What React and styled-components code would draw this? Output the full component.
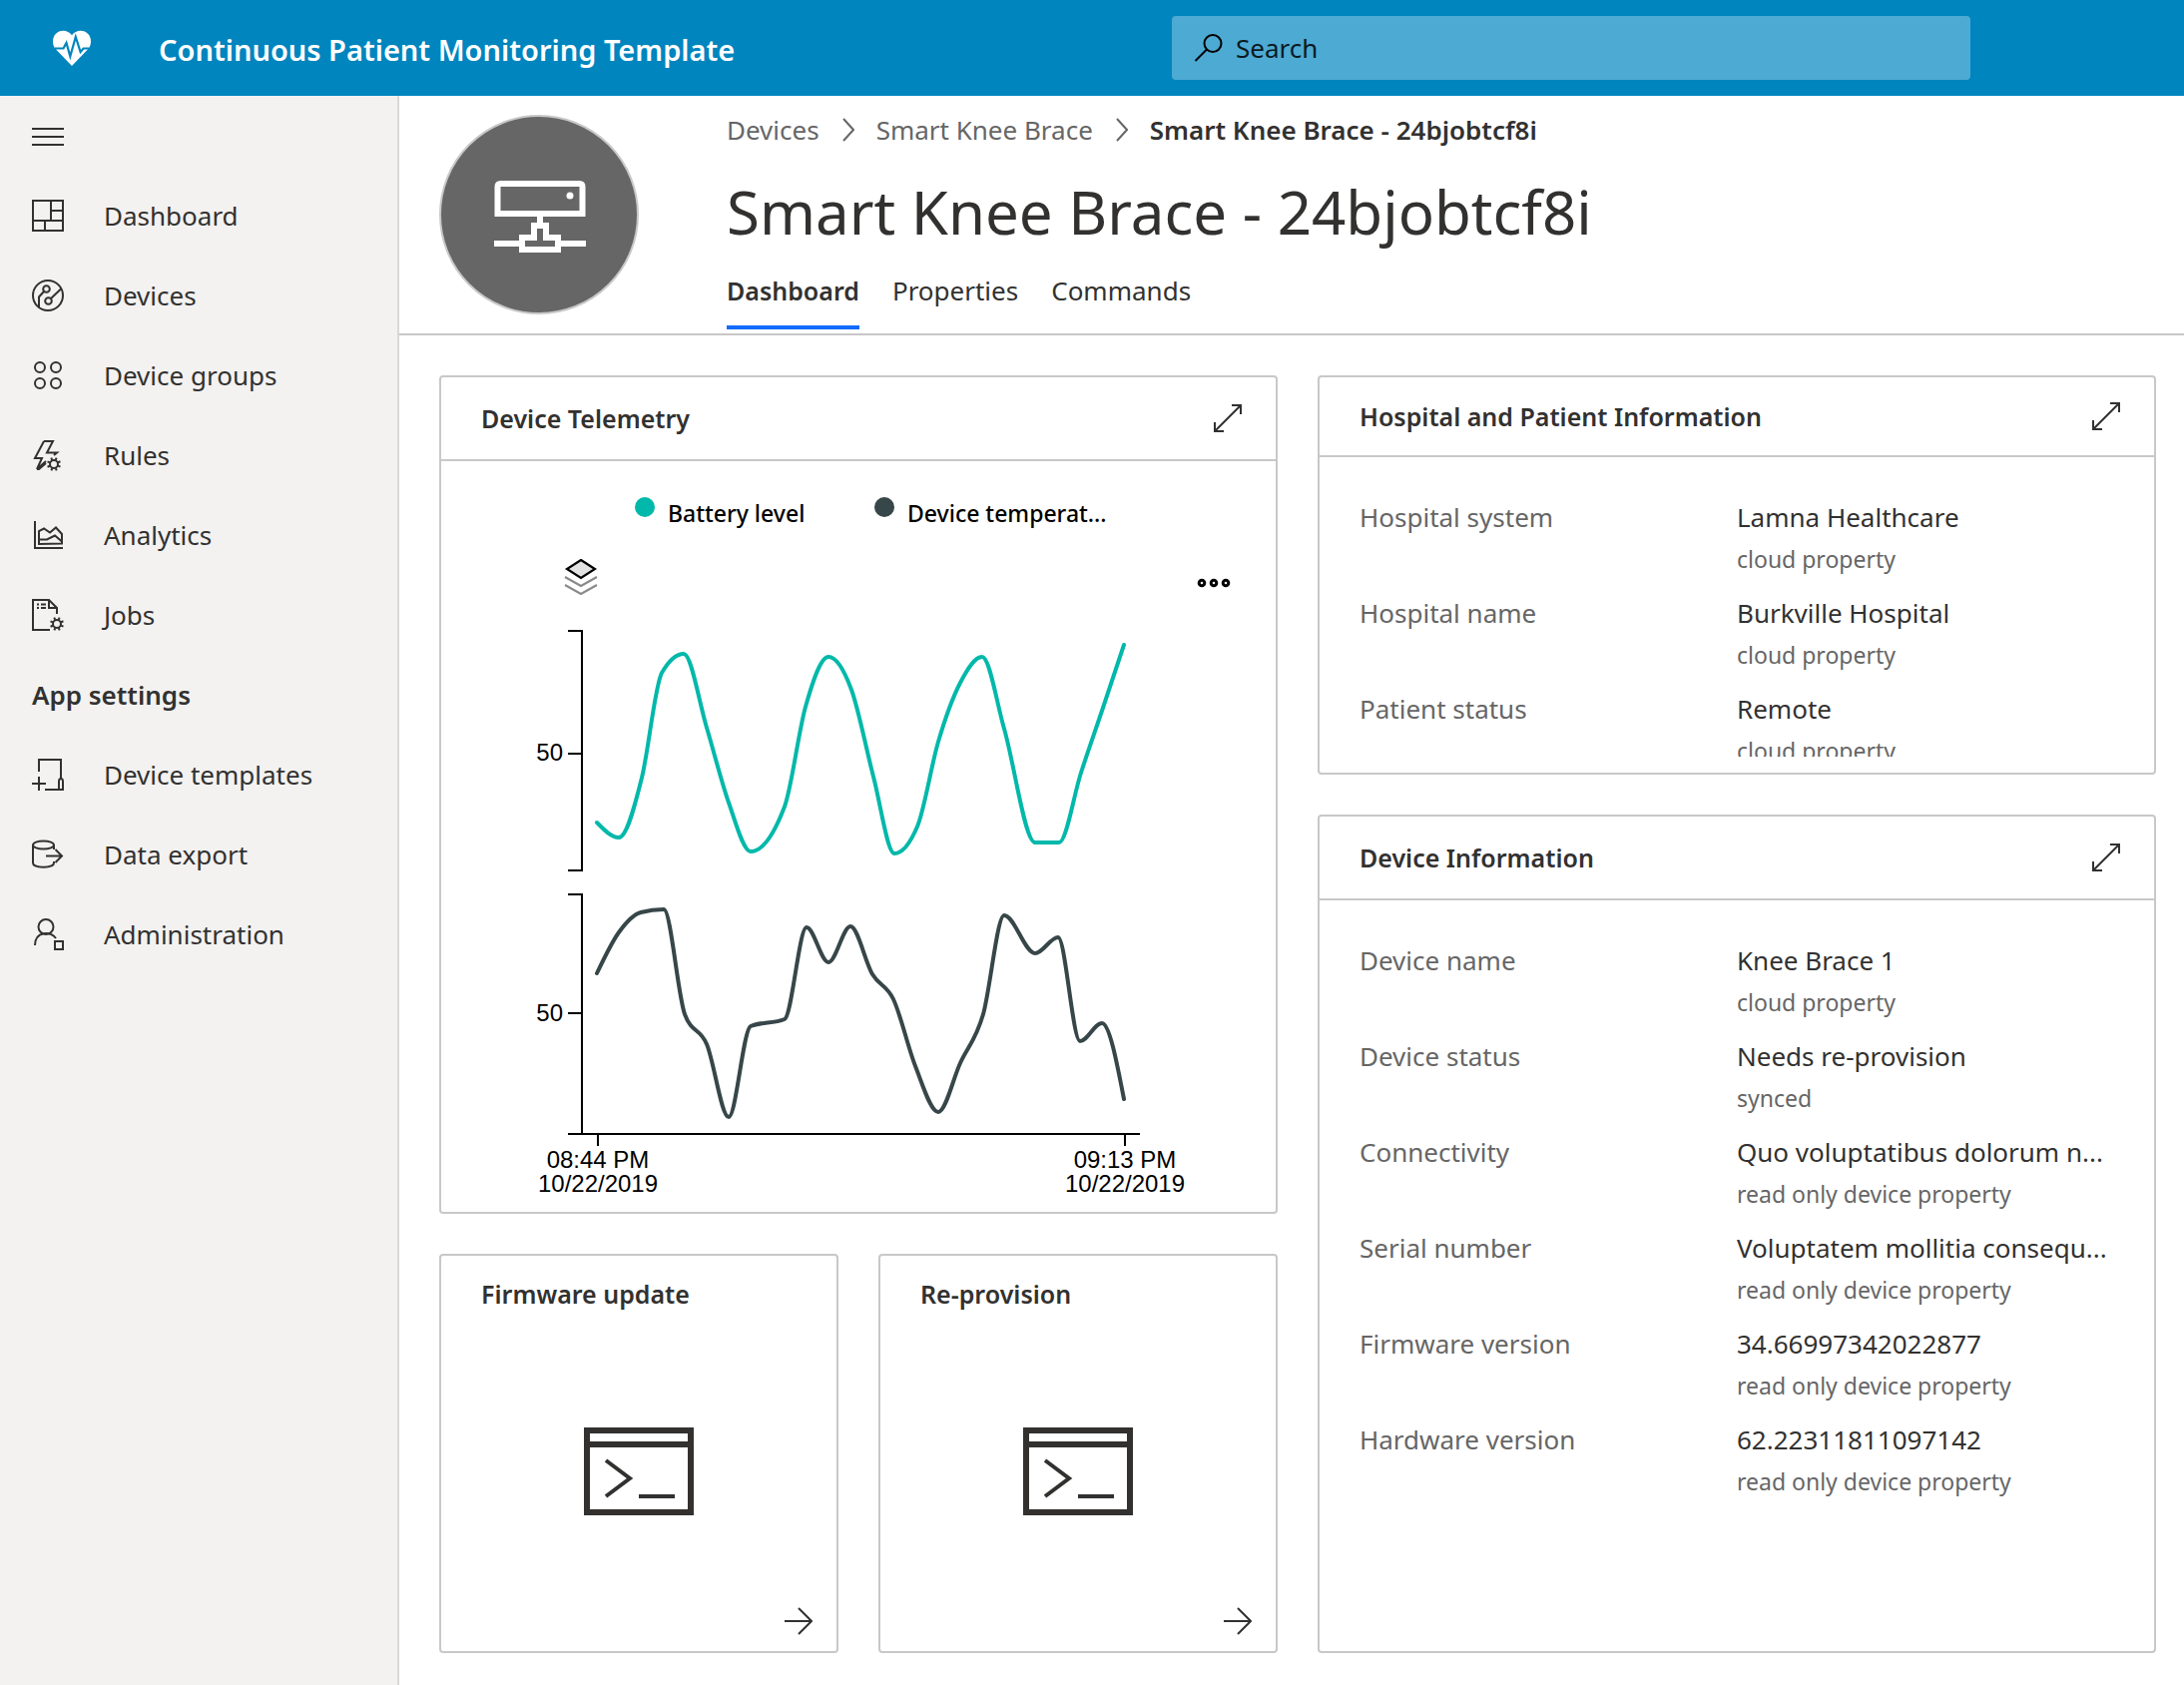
import React from "react";
import styled, { createGlobalStyle } from "styled-components";

const color = {
  brand: "#0085be",
  searchFill: "#4daad3",
  ink: "#323130",
  muted: "#666666",
  line: "#c8c8c8",
  sidebar: "#f3f2f1",
  accent: "#136bfb",
  teal: "#01b8aa",
  slate: "#374649",
};

const GlobalStyle = createGlobalStyle`
  *, *::before, *::after { box-sizing: border-box; }
  body {
    margin: 0;
    background: #ffffff;
    color: ${color.ink};
    font-family: "Noto Sans", "Open Sans", sans-serif;
    font-size: 26px;
    line-height: 40px;
  }
  h1, h2, p, ul, ol, dl, dd { margin: 0; padding: 0; }
  ul, ol { list-style: none; }
  a { color: inherit; text-decoration: none; }
  button {
    font: inherit;
    color: inherit;
    background: none;
    border: 0;
    padding: 0;
    cursor: pointer;
  }
  svg { display: block; }
`;

/* ---------- shell ---------- */

const Page = styled.div`
  display: flex;
  flex-direction: column;
  min-height: 100vh;
`;

const TopBar = styled.header`
  display: flex;
  align-items: center;
  height: 96px;
  padding: 0 214px 0 52px;
  background: ${color.brand};
  color: #ffffff;
`;

const AppTitle = styled.a`
  margin-left: 67px;
  padding-top: 3px;
  font-size: 29px;
  font-weight: 600;
  white-space: nowrap;
`;

const SearchBox = styled.label`
  display: flex;
  align-items: center;
  gap: 12px;
  flex: 0 1 800px;
  height: 64px;
  margin-left: auto;
  padding: 0 22px;
  border-radius: 4px;
  background: ${color.searchFill};
  color: #000000;
`;

const SearchInput = styled.input`
  flex: 1;
  min-width: 0;
  border: 0;
  outline: 0;
  padding: 0;
  background: transparent;
  color: inherit;
  font: inherit;
  &::placeholder {
    color: #0b1a22;
    opacity: 1;
  }
`;

const Body = styled.div`
  display: flex;
  flex: 1;
`;

const Sidebar = styled.nav`
  flex: 0 0 400px;
  border-right: 2px solid #d8d8d8;
  background: ${color.sidebar};
`;

const MenuButton = styled.button`
  display: flex;
  align-items: center;
  width: 100%;
  height: 80px;
  padding-left: 32px;
`;

const NavLink = styled.a`
  display: flex;
  align-items: center;
  gap: 40px;
  height: 80px;
  padding-left: 32px;
`;

const NavHeading = styled.h2`
  height: 80px;
  padding-left: 32px;
  font-size: 26px;
  font-weight: 600;
  line-height: 80px;
`;

const Main = styled.main`
  flex: 1;
  min-width: 0;
`;

/* ---------- device header ---------- */

const DeviceHeader = styled.div`
  display: flex;
  gap: 88px;
  height: 240px;
  padding: 0 40px;
  border-bottom: 2px solid ${color.line};
`;

const Avatar = styled.div`
  display: flex;
  align-items: center;
  justify-content: center;
  width: 200px;
  height: 200px;
  margin-top: 19px;
  padding: 4px 0 0 2px;
  border: 2px solid ${color.line};
  border-radius: 50%;
  background: #666666;
`;

const HeaderText = styled.div`
  padding-top: 14px;
`;

const Crumbs = styled.ol`
  display: flex;
  align-items: center;
  color: ${color.muted};
`;

const Crumb = styled.li`
  display: flex;
  align-items: center;
  color: ${(p) => (p.$current ? color.ink : color.muted)};
  font-weight: ${(p) => (p.$current ? 600 : 400)};
  svg { margin: 0 22px 0 23px; }
`;

const DeviceTitle = styled.h1`
  margin: 22px 0 21px;
  font-size: 60px;
  font-weight: 400;
  line-height: 80px;
`;

const Tabs = styled.div`
  display: flex;
  gap: 33px;
`;

const Tab = styled.button`
  height: 57px;
  padding-bottom: 17px;
  border-bottom: 4px solid ${(p) => (p.$active ? color.accent : "transparent")};
  font-size: ${(p) => (p.$active ? "25px" : "26px")};
  font-weight: ${(p) => (p.$active ? 600 : 400)};
  line-height: 36px;
`;

/* ---------- tiles ---------- */

const Board = styled.div`
  display: grid;
  grid-template-columns: repeat(4, minmax(0, 1fr));
  grid-auto-rows: 400px;
  gap: 40px;
  padding: 40px 28px 32px 40px;
`;

const Tile = styled.section`
  display: flex;
  flex-direction: column;
  grid-column: ${(p) => p.$column};
  grid-row: ${(p) => p.$row};
  border: 2px solid ${color.line};
  border-radius: 4px;
  overflow: hidden;
`;

const TileHeader = styled.header`
  display: flex;
  flex: none;
  align-items: center;
  justify-content: space-between;
  height: ${(p) => (p.$compact ? "80px" : "84px")};
  padding: 0 33px 0 40px;
  border-bottom: 2px solid ${color.line};
`;

const TileTitle = styled.h2`
  font-size: 25px;
  font-weight: 600;
  line-height: 40px;
`;

const IconButton = styled.button`
  display: flex;
`;

const PropertyClip = styled.div`
  flex: 1;
  min-height: 0;
  margin-bottom: 16px;
  padding: 40px 40px 0;
  overflow: hidden;
`;

const PropertyRow = styled.div`
  display: grid;
  grid-template-columns: 1fr 1fr;
  height: 96px;
`;

const PropertyName = styled.dt`
  color: ${color.muted};
`;

const PropertyValue = styled.dd`
  white-space: nowrap;
`;

const PropertyKind = styled.p`
  color: ${color.muted};
  font-size: 23px;
  line-height: 44px;
`;

const ActionTile = styled(Tile)`
  padding: 18px 24px 16px 40px;
`;

const ActionArt = styled.div`
  display: flex;
  flex: 1;
  align-items: center;
  justify-content: center;
  margin: 22px 16px 0 0;
`;

const ActionFooter = styled.div`
  display: flex;
  justify-content: flex-end;
`;

/* ---------- telemetry ---------- */

const Telemetry = styled.div`
  display: flex;
  flex-direction: column;
  flex: 1;
`;

const Legend = styled.ul`
  display: flex;
  justify-content: center;
  padding: 32px 0 0 32px;
`;

const LegendItem = styled.li`
  display: flex;
  align-items: flex-start;
  gap: 13px;
  width: 240px;
  color: #000000;
  font-size: 23px;
  font-weight: 500;
  white-space: nowrap;
`;

const Swatch = styled.span`
  flex: none;
  width: 20px;
  height: 20px;
  margin-top: 4px;
  border-radius: 50%;
  background: ${(p) => p.$fill};
`;

const ChartTools = styled.div`
  display: flex;
  align-items: flex-end;
  justify-content: space-between;
  padding: 26px 45px 26px 123px;
`;

const MoreButton = styled(IconButton)`
  padding-bottom: 7px;
`;

const Chart = styled.svg`
  width: 100%;
  height: auto;
  text {
    fill: #000000;
    font-family: "Liberation Sans", Arial, sans-serif;
    font-size: 24px;
  }
`;

/* ---------- chart data and curve ---------- */

const batteryLevel = [
  [156, 202], [178, 217], [201, 157], [221, 52], [243, 33], [266, 107],
  [288, 182], [310, 231], [344, 186], [365, 86], [388, 36], [411, 69],
  [433, 156], [454, 233], [477, 206], [498, 121], [520, 62], [542, 36],
  [564, 108], [595, 222], [619, 222], [641, 152], [663, 87], [684, 24],
];

const deviceTemperature = [
  [156, 353], [178, 312], [200, 292], [223, 289], [244, 394], [266, 424],
  [288, 497], [310, 406], [344, 399], [366, 307], [388, 342], [410, 306],
  [432, 354], [453, 379], [475, 446], [498, 492], [520, 443], [543, 394],
  [564, 295], [595, 333], [618, 317], [640, 421], [662, 403], [684, 479],
];

// Monotone cubic interpolation: no overshoot between samples.
function monotonePath(points) {
  const n = points.length;
  const slope = points.slice(1).map(([x, y], i) => (y - points[i][1]) / (x - points[i][0]));
  const tangent = points.map((_, i) => {
    if (i === 0 || i === n - 1) return null;
    const s0 = slope[i - 1];
    const s1 = slope[i];
    if (s0 * s1 <= 0) return 0;
    const h0 = points[i][0] - points[i - 1][0];
    const h1 = points[i + 1][0] - points[i][0];
    const p = (s0 * h1 + s1 * h0) / (h0 + h1);
    return 2 * Math.sign(s0) * Math.min(Math.abs(s0), Math.abs(s1), Math.abs(p) / 2);
  });
  tangent[0] = (3 * slope[0] - tangent[1]) / 2;
  tangent[n - 1] = (3 * slope[n - 2] - tangent[n - 2]) / 2;
  return points.slice(1).reduce((d, [x, y], i) => {
    const [px, py] = points[i];
    const dx = (x - px) / 3;
    return `${d}C${px + dx},${py + dx * tangent[i]},${x - dx},${y - dx * tangent[i + 1]},${x},${y}`;
  }, `M${points[0]}`);
}

/* ---------- icons ---------- */

const Line = ({ size = 32, width = size, height = size, stroke = 2, children, ...rest }) => (
  <svg width={width} height={height} viewBox={`0 0 ${width} ${height}`} fill="none" stroke="currentColor" strokeWidth={stroke} aria-hidden="true" {...rest}>
    {children}
  </svg>
);

const Gear = ({ x, y }) => (
  <g transform={`translate(${x} ${y})`}>
    <circle r="4" />
    {[0, 45, 90, 135, 180, 225, 270, 315].map((a) => (
      <path key={a} d="M0-4.5V-7" transform={`rotate(${a + 22})`} />
    ))}
  </g>
);

const HeartIcon = () => (
  <svg width="40" height="36" viewBox="0 0 40 36" aria-hidden="true">
    <path fill="#fff" d="M20 36 3.600 19C0 15 .2 8 3.500 4.200 8-.8 16-.4 20 5.200 24-.4 32-.8 36.500 4.200 39.800 8 40 15 36.400 19Z" />
    <path fill="none" stroke={color.brand} strokeWidth="2.200" d="M3 18.500h8.500L14.500 13l3.800 13.500L23.800 7l4.800 15 3-3.500H37" />
  </svg>
);

const SearchIcon = () => (
  <Line width={30} height={30}>
    <circle cx="19" cy="10.500" r="8.500" />
    <path d="M13 16.500 1.500 28" />
  </Line>
);

const icons = {
  dashboard: (
    <Line><path d="M1 1h30v30H1ZM19 1v20M19 11h12M1 21h30M13 21v10" /></Line>
  ),
  devices: (
    <Line>
      <circle cx="16" cy="16" r="15" />
      <circle cx="14.500" cy="9.500" r="3.300" />
      <circle cx="16.500" cy="21.500" r="3.300" />
      <path d="M12 12 7 17.500V28M19 19 29 9.500" />
    </Line>
  ),
  groups: (
    <Line>
      <circle cx="8" cy="8" r="5" /><circle cx="24" cy="8" r="5" />
      <circle cx="8" cy="24" r="5" /><circle cx="24" cy="24" r="5" />
    </Line>
  ),
  rules: (
    <Line>
      <path d="M12 2h9l-6 11.500h10L22 16M12 2 3 19h7L5 30l9-8M5 30h2l7-6" />
      <Gear x={22} y={25} />
    </Line>
  ),
  analytics: (
    <Line>
      <path d="M3 2v27h28M7 25V12l5-2.500 6 4 6-5 6 6.500v9.500ZM7 20.500h8l8-4 7 6" />
    </Line>
  ),
  jobs: (
    <Line>
      <path d="M18 31H1V1h16l8 8v6M17 1v8h8M5 5.500h2M9 5.500h5M5 9h2M9 9h5" />
      <Gear x={25} y={25} />
    </Line>
  ),
  templates: (
    <Line>
      <path d="M7 13V1h22v20M0 25h14M7 18v14M13 31h16M31 31V23q0-3-2-3t-2 3v8Z" />
    </Line>
  ),
  export: (
    <Line>
      <ellipse cx="11.500" cy="6.500" rx="10.500" ry="4" />
      <path d="M1 6.500v18c0 5.500 21 5.500 21 0V23M22 6.500V11M14 17.500h16M23.500 11 30 17.500 23.500 24" />
    </Line>
  ),
  admin: (
    <Line>
      <circle cx="14" cy="8.500" r="7.500" />
      <path d="M3 27c0-14 16-15 21-7M23 23h8v8h-8Z" />
    </Line>
  ),
};

const DeviceIcon = () => (
  <svg width="92" height="72" viewBox="0 0 92 72" fill="none" stroke="#fff" strokeWidth="6" aria-hidden="true">
    <path d="M3.500 33V6q0-3 3-3h79q3 0 3 3v27Z" />
    <circle cx="76" cy="15" r="3.500" fill="#fff" stroke="none" />
    <path d="M46 36v7M0 63h27M65 63h27" />
    <path d="M40 57V45h12v12h12v12H28V57Z" />
  </svg>
);

const ChevronIcon = () => (
  <Line width={12} height={24}><path d="M1 1 11 12 1 23" /></Line>
);

const ExpandIcon = () => (
  <Line width={30} height={30}>
    <path d="M2 28 28 2M19 2h9v9M2 19v9h9" />
  </Line>
);

const ArrowIcon = () => (
  <Line width={28} height={28}><path d="M0 14h27M14 1 27 14 14 27" /></Line>
);

const TerminalIcon = () => (
  <Line width={110} height={88} stroke={6}>
    <path d="M3 3h104v82H3ZM3 17h104" />
    <path strokeWidth="4" d="M22 33 46 51 22 69M55 69h36" />
  </Line>
);

const LayersIcon = () => (
  <svg width="34" height="36" viewBox="0 0 34 36" fill="none" strokeWidth="2.200" aria-hidden="true">
    <path d="m1 18 16 9 16-9M1 26l16 9 16-9" stroke="#8a8a8a" />
    <path d="m17 1 14 9-14 9-14-9Z" fill="#e2e2e2" stroke="#000" />
  </svg>
);

const MoreIcon = () => (
  <Line width={34} height={10} stroke={3}>
    <g stroke="#000">
      <circle cx="5" cy="5" r="2.800" /><circle cx="17" cy="5" r="2.800" /><circle cx="29" cy="5" r="2.800" />
    </g>
  </Line>
);

/* ---------- content ---------- */

const primaryNav = [
  ["Dashboard", "dashboard"],
  ["Devices", "devices"],
  ["Device groups", "groups"],
  ["Rules", "rules"],
  ["Analytics", "analytics"],
  ["Jobs", "jobs"],
];

const settingsNav = [
  ["Device templates", "templates"],
  ["Data export", "export"],
  ["Administration", "admin"],
];

const hospitalInfo = [
  ["Hospital system", "Lamna Healthcare", "cloud property"],
  ["Hospital name", "Burkville Hospital", "cloud property"],
  ["Patient status", "Remote", "cloud property"],
];

const deviceInfo = [
  ["Device name", "Knee Brace 1", "cloud property"],
  ["Device status", "Needs re-provision", "synced"],
  ["Connectivity", "Quo voluptatibus dolorum n...", "read only device property"],
  ["Serial number", "Voluptatem mollitia consequ...", "read only device property"],
  ["Firmware version", "34.66997342022877", "read only device property"],
  ["Hardware version", "62.22311811097142", "read only device property"],
];

const NavList = ({ items }) => (
  <ul>
    {items.map(([label, icon]) => (
      <li key={label}>
        <NavLink href="#">{icons[icon]}{label}</NavLink>
      </li>
    ))}
  </ul>
);

const ExpandableHeader = ({ title, compact }) => (
  <TileHeader $compact={compact}>
    <TileTitle>{title}</TileTitle>
    <IconButton type="button" aria-label={`Expand ${title}`}><ExpandIcon /></IconButton>
  </TileHeader>
);

const PropertyTile = ({ title, rows, compact, column, row }) => (
  <Tile $column={column} $row={row}>
    <ExpandableHeader title={title} compact={compact} />
    <PropertyClip>
      <dl>
        {rows.map(([name, value, kind]) => (
          <PropertyRow key={name}>
            <PropertyName>{name}</PropertyName>
            <PropertyValue>
              {value}
              <PropertyKind>{kind}</PropertyKind>
            </PropertyValue>
          </PropertyRow>
        ))}
      </dl>
    </PropertyClip>
  </Tile>
);

const CommandTile = ({ title, column }) => (
  <ActionTile $column={column} $row="3">
    <TileTitle>{title}</TileTitle>
    <ActionArt><TerminalIcon /></ActionArt>
    <ActionFooter>
      <IconButton type="button" aria-label={`Run ${title}`}><ArrowIcon /></IconButton>
    </ActionFooter>
  </ActionTile>
);

const TelemetryChart = () => (
  <Chart viewBox="0 0 836 580" role="img" aria-label="Battery level and device temperature over time">
    <g fill="none" stroke="#000" strokeWidth="2">
      <path d="M127 10h14v240h-14M127 133h14" />
      <path d="M127 274h14v240M127 393h14M127 514h573M157 514v12M685 514v12" />
    </g>
    <g fill="none" strokeWidth="4" strokeLinecap="round">
      <path d={monotonePath(batteryLevel)} stroke={color.teal} />
      <path d={monotonePath(deviceTemperature)} stroke={color.slate} />
    </g>
    <text x="122" y="140" textAnchor="end">50</text>
    <text x="122" y="401" textAnchor="end">50</text>
    <text x="157" y="548" textAnchor="middle">08:44 PM</text>
    <text x="157" y="572" textAnchor="middle">10/22/2019</text>
    <text x="685" y="548" textAnchor="middle">09:13 PM</text>
    <text x="685" y="572" textAnchor="middle">10/22/2019</text>
  </Chart>
);

export default function App() {
  return (
    <Page>
      <GlobalStyle />
      <TopBar>
        <HeartIcon />
        <AppTitle href="#">Continuous Patient Monitoring Template</AppTitle>
        <SearchBox>
          <SearchIcon />
          <SearchInput type="search" placeholder="Search" aria-label="Search" />
        </SearchBox>
      </TopBar>
      <Body>
        <Sidebar aria-label="Main">
          <MenuButton type="button" aria-label="Toggle navigation">
            <Line><path d="M0 9h32M0 17h32M0 25h32" /></Line>
          </MenuButton>
          <NavList items={primaryNav} />
          <NavHeading>App settings</NavHeading>
          <NavList items={settingsNav} />
        </Sidebar>
        <Main>
          <DeviceHeader>
            <Avatar><DeviceIcon /></Avatar>
            <HeaderText>
              <Crumbs>
                <Crumb><a href="#">Devices</a><ChevronIcon /></Crumb>
                <Crumb><a href="#">Smart Knee Brace</a><ChevronIcon /></Crumb>
                <Crumb $current aria-current="page">Smart Knee Brace - 24bjobtcf8i</Crumb>
              </Crumbs>
              <DeviceTitle>Smart Knee Brace - 24bjobtcf8i</DeviceTitle>
              <Tabs role="tablist">
                <Tab type="button" role="tab" aria-selected="true" $active>Dashboard</Tab>
                <Tab type="button" role="tab" aria-selected="false">Properties</Tab>
                <Tab type="button" role="tab" aria-selected="false">Commands</Tab>
              </Tabs>
            </HeaderText>
          </DeviceHeader>
          <Board>
            <Tile $column="1 / span 2" $row="1 / span 2">
              <ExpandableHeader title="Device Telemetry" />
              <Telemetry>
                <Legend>
                  <LegendItem><Swatch $fill={color.teal} />Battery level</LegendItem>
                  <LegendItem><Swatch $fill={color.slate} />Device temperat...</LegendItem>
                </Legend>
                <ChartTools>
                  <IconButton type="button" aria-label="Series layout"><LayersIcon /></IconButton>
                  <MoreButton type="button" aria-label="More options"><MoreIcon /></MoreButton>
                </ChartTools>
                <TelemetryChart />
              </Telemetry>
            </Tile>
            <PropertyTile title="Hospital and Patient Information" rows={hospitalInfo} compact column="3 / span 2" row="1" />
            <PropertyTile title="Device Information" rows={deviceInfo} column="3 / span 2" row="2 / span 2" />
            <CommandTile title="Firmware update" column="1" />
            <CommandTile title="Re-provision" column="2" />
          </Board>
        </Main>
      </Body>
    </Page>
  );
}
